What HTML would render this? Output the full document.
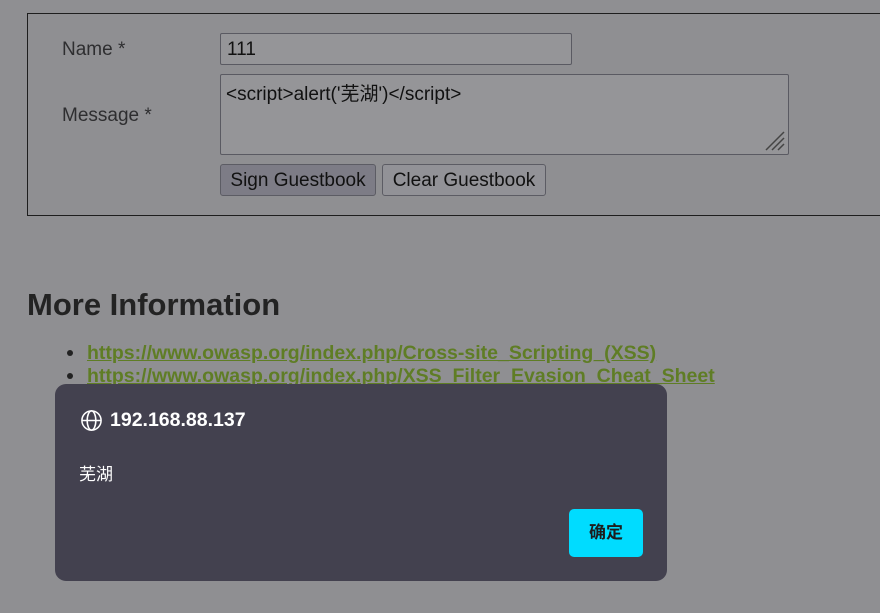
<!DOCTYPE html>
<html><head><meta charset="utf-8"><style>
body{margin:0;width:880px;height:613px;background:#8f8f92;font-family:"Liberation Sans","Noto Sans CJK SC",sans-serif;color:#2b2b2b;position:relative;overflow:hidden}
.fs{position:absolute;left:27px;top:13px;width:900px;height:201px;border:1px solid #1e1e1e}
.lbl{position:absolute;font-size:19px;color:#2e2e30}
.box{position:absolute;background:#959598;border:1px solid #5a5a62;border-radius:2px;box-sizing:border-box;font-size:19px;color:#111;padding-left:6px}
.btn{position:absolute;top:164px;height:32px;border:1px solid #5c5c64;border-radius:3px;box-sizing:border-box;font-size:19px;color:#111;text-align:center;line-height:31px;background:#929297}
h2{position:absolute;left:27px;top:287px;margin:0;font-size:31px;font-weight:bold;color:#232323}
.li{position:absolute;left:87px;font-size:19.5px;font-weight:bold;color:#5f7d25;text-decoration:underline}
.dot{position:absolute;left:67px;width:6px;height:6px;border-radius:50%;background:#222}
.dlg{position:absolute;left:55px;top:384px;width:612px;height:197px;background:#43414f;border-radius:11px;color:#fff}
.ok{position:absolute;left:514px;top:125px;width:74px;height:48px;background:#00dcff;border-radius:5px;color:#1d1d1d;font-weight:bold;font-size:17px;text-align:center;line-height:48px}
</style></head><body>
<div class="fs"></div>
<div class="lbl" style="left:62px;top:39px">Name *</div>
<div class="lbl" style="left:62px;top:105px">Message *</div>
<div class="box" style="left:220px;top:33px;width:352px;height:32px;line-height:31px">111</div>
<div class="box" style="left:220px;top:74px;width:569px;height:81px;padding-top:9px;padding-left:5px;line-height:22px">&lt;script&gt;alert('芜湖')&lt;/script&gt;
<svg style="position:absolute;right:3px;bottom:3px" width="22" height="22"><path d="M21 3L3 21M21 9L9 21M21 15L15 21" stroke="#444" stroke-width="1.5"/></svg></div>
<div class="btn" style="left:220px;width:156px;background:#7d7c86">Sign Guestbook</div>
<div class="btn" style="left:382px;width:164px">Clear Guestbook</div>
<h2>More Information</h2>
<div class="dot" style="top:350px"></div><div class="li" style="top:342px">https://www.owasp.org/index.php/Cross-site_Scripting_(XSS)</div>
<div class="dot" style="top:373px"></div><div class="li" style="top:365px">https://www.owasp.org/index.php/XSS_Filter_Evasion_Cheat_Sheet</div>
<div class="dlg">
<svg style="position:absolute;left:25px;top:25px" width="23" height="23" viewBox="0 0 24 24" fill="none" stroke="#fff" stroke-width="1.6"><circle cx="12" cy="12" r="10"/><ellipse cx="12" cy="12" rx="4.5" ry="10"/><path d="M2 12h20"/></svg>
<div style="position:absolute;left:55px;top:25px;font-size:19.5px;font-weight:bold">192.168.88.137</div>
<div style="position:absolute;left:24px;top:76px;font-size:17px">芜湖</div>
<div class="ok">确定</div>
</div>
</body></html>
